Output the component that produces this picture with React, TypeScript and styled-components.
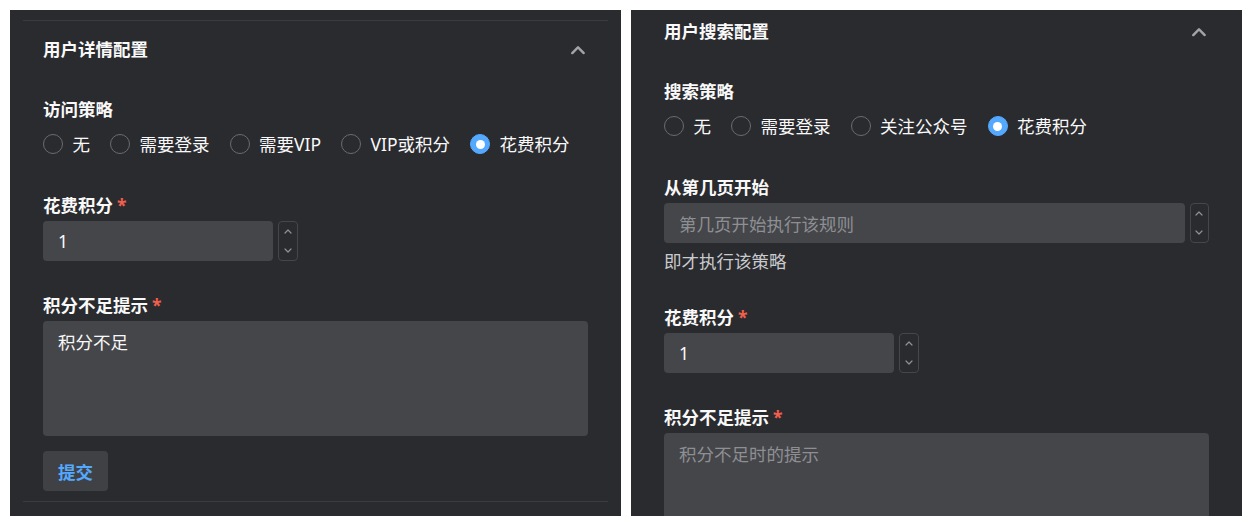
import React, { useLayoutEffect, useRef } from "react";
import styled, { createGlobalStyle } from "styled-components";

const GlobalStyle = createGlobalStyle`
  html, body { margin: 0; padding: 0; background: #ffffff; }
  body {
    font-family: "Noto Sans", "Noto Sans CJK SC", sans-serif;
    -webkit-font-smoothing: antialiased;
  }
  * { box-sizing: border-box; }
`;

const Page = styled.div`
  display: flex;
  gap: 10px;
  padding: 10px;
  width: 1252px;
  height: 526px;
`;

const Panel = styled.div`
  flex: 1 1 0;
  min-width: 0;
  height: 506px;
  background: #2a2b2f;
  padding: 10px 13px 15px;
  overflow: hidden;
`;

const CollapseItem = styled.section`
  border-top: 1px solid #3b3c40;
  border-bottom: 1px solid #3b3c40;
`;

const Header = styled.div`
  height: 57px;
  padding: 0 20px;
  display: flex;
  align-items: center;
  justify-content: space-between;
`;

const HeaderTitle = styled.div`
  font-size: 17.5px;
  line-height: 25px;
  font-weight: 700;
  color: #f9f9f9;
`;

const IconBox = styled.span<{ $size: number }>`
  width: ${(p) => p.$size}px;
  height: ${(p) => p.$size}px;
  display: flex;
  align-items: center;
  justify-content: center;
  color: #a3a4a7;
  svg { display: block; }
`;

const Content = styled.div`
  padding: 18.5px 20px 10px;
`;

const Field = styled.div`
  & + & { margin-top: 31.5px; }
`;

const Label = styled.div`
  font-size: 17.5px;
  line-height: 25px;
  font-weight: 700;
  color: #f9f9f9;
  margin-bottom: 3.5px;
  display: flex;
  align-items: center;
`;

const Required = styled.span`
  color: #f25f4c;
  margin-left: 4px;
  font-weight: 700;
`;

const RadioGroup = styled.div`
  height: 36px;
  padding-top: 2px;
  display: flex;
  align-items: center;
  white-space: nowrap;
`;

const RadioItem = styled.label`
  display: inline-flex;
  flex: 0 0 auto;
  align-items: center;
  margin-right: 20px;
  font-size: 17.5px;
  line-height: 25px;
  color: #f9f9f9;
  white-space: nowrap;
`;

const RadioCircle = styled.span<{ $checked?: boolean }>`
  flex: 0 0 auto;
  width: 20px;
  height: 20px;
  border-radius: 50%;
  border: 1px solid ${(p) => (p.$checked ? "#54a9ff" : "#6a6b6e")};
  background: ${(p) => (p.$checked ? "#54a9ff" : "transparent")};
  display: flex;
  align-items: center;
  justify-content: center;
  &::after {
    content: "";
    display: ${(p) => (p.$checked ? "block" : "none")};
    width: 9px;
    height: 9px;
    border-radius: 50%;
    background: #ffffff;
  }
`;

const RadioText = styled.span`
  margin-left: 9.5px;
`;

const NumberRow = styled.div<{ $width?: number }>`
  display: flex;
  gap: 5px;
  width: ${(p) => (p.$width ? `${p.$width}px` : "100%")};
  height: 40px;
`;

const InputBox = styled.div<{ $placeholder?: boolean }>`
  flex: 1 1 0;
  height: 40px;
  background: #45464a;
  border-radius: 4px;
  padding: 0 15px;
  display: flex;
  align-items: center;
  font-size: 17.5px;
  color: ${(p) => (p.$placeholder ? "#8e8f93" : "#f9f9f9")};
`;

const Stepper = styled.div`
  width: 19.5px;
  height: 40px;
  border: 1px solid #46474b;
  border-radius: 4px;
  display: flex;
  flex-direction: column;
`;

const StepHalf = styled.span`
  flex: 1;
  display: flex;
  align-items: center;
  justify-content: center;
  color: #909195;
`;

const TextArea = styled.div<{ $placeholder?: boolean }>`
  height: 115px;
  background: #45464a;
  border-radius: 4px;
  padding: 9px 15px;
  font-size: 17.5px;
  line-height: 25px;
  color: ${(p) => (p.$placeholder ? "#8e8f93" : "#f9f9f9")};
`;

const Help = styled.div`
  padding-top: 6px;
  font-size: 17.5px;
  line-height: 24px;
  color: #c9cacd;
`;

const SubmitButton = styled.button`
  margin-top: 15px;
  height: 40px;
  padding: 0 15px;
  border: none;
  border-radius: 4px;
  background: #404145;
  color: #54a9ff;
  font-family: inherit;
  font-size: 17.5px;
  font-weight: 700;
  display: block;
`;

const chevronPath =
  "M4.08 16.68a1.5 1.5 0 0 0 2.12 0L12 10.88l5.8 5.8a1.5 1.5 0 0 0 2.12-2.12l-6.86-6.86a1.5 1.5 0 0 0-2.12 0l-6.86 6.86a1.5 1.5 0 0 0 0 2.12Z";

const ChevronUp = ({ size }: { size: number }) => (
  <IconBox $size={size}>
    <svg width={size} height={size} viewBox="0 0 24 24" fill="currentColor">
      <path d={chevronPath} />
    </svg>
  </IconBox>
);

const SmallChevron = ({ down }: { down?: boolean }) => (
  <svg width="8" height="5" viewBox="0 0 8 5" fill="none" stroke="currentColor" strokeWidth="1.2" strokeLinecap="round" strokeLinejoin="round">
    {down ? <polyline points="1,1 4,4 7,1" /> : <polyline points="1,4 4,1 7,4" />}
  </svg>
);

const NumberInput = ({ value, placeholder, width }: { value?: string; placeholder?: string; width?: number }) => (
  <NumberRow $width={width}>
    <InputBox $placeholder={!value}>{value ?? placeholder}</InputBox>
    <Stepper>
      <StepHalf><SmallChevron /></StepHalf>
      <StepHalf><SmallChevron down /></StepHalf>
    </Stepper>
  </NumberRow>
);

const Radios = ({ options, checked }: { options: string[]; checked: string }) => (
  <RadioGroup>
    {options.map((o) => (
      <RadioItem key={o}>
        <RadioCircle $checked={o === checked} />
        <RadioText>{o}</RadioText>
      </RadioItem>
    ))}
  </RadioGroup>
);

const SectionHeader = ({ title }: { title: string }) => (
  <Header>
    <HeaderTitle>{title}</HeaderTitle>
    <ChevronUp size={20} />
  </Header>
);

export default function App() {
  const rightRef = useRef<HTMLDivElement>(null);
  useLayoutEffect(() => {
    if (rightRef.current) rightRef.current.scrollTop = 18;
  }, []);

  return (
    <>
      <GlobalStyle />
      <Page>
        <Panel>
          <CollapseItem>
            <SectionHeader title="用户详情配置" />
            <Content>
              <Field>
                <Label>访问策略</Label>
                <Radios options={["无", "需要登录", "需要VIP", "VIP或积分", "花费积分"]} checked="花费积分" />
              </Field>
              <Field>
                <Label>花费积分<Required>*</Required></Label>
                <NumberInput value="1" width={254.5} />
              </Field>
              <Field>
                <Label>积分不足提示<Required>*</Required></Label>
                <TextArea>积分不足</TextArea>
                <SubmitButton>提交</SubmitButton>
              </Field>
            </Content>
          </CollapseItem>
        </Panel>
        <Panel ref={rightRef}>
          <CollapseItem>
            <SectionHeader title="用户搜索配置" />
            <Content>
              <Field>
                <Label>搜索策略</Label>
                <Radios options={["无", "需要登录", "关注公众号", "花费积分"]} checked="花费积分" />
              </Field>
              <Field>
                <Label>从第几页开始</Label>
                <NumberInput placeholder="第几页开始执行该规则" />
                <Help>即才执行该策略</Help>
              </Field>
              <Field>
                <Label>花费积分<Required>*</Required></Label>
                <NumberInput value="1" width={254.5} />
              </Field>
              <Field>
                <Label>积分不足提示<Required>*</Required></Label>
                <TextArea $placeholder>积分不足时的提示</TextArea>
              </Field>
            </Content>
          </CollapseItem>
        </Panel>
      </Page>
    </>
  );
}
